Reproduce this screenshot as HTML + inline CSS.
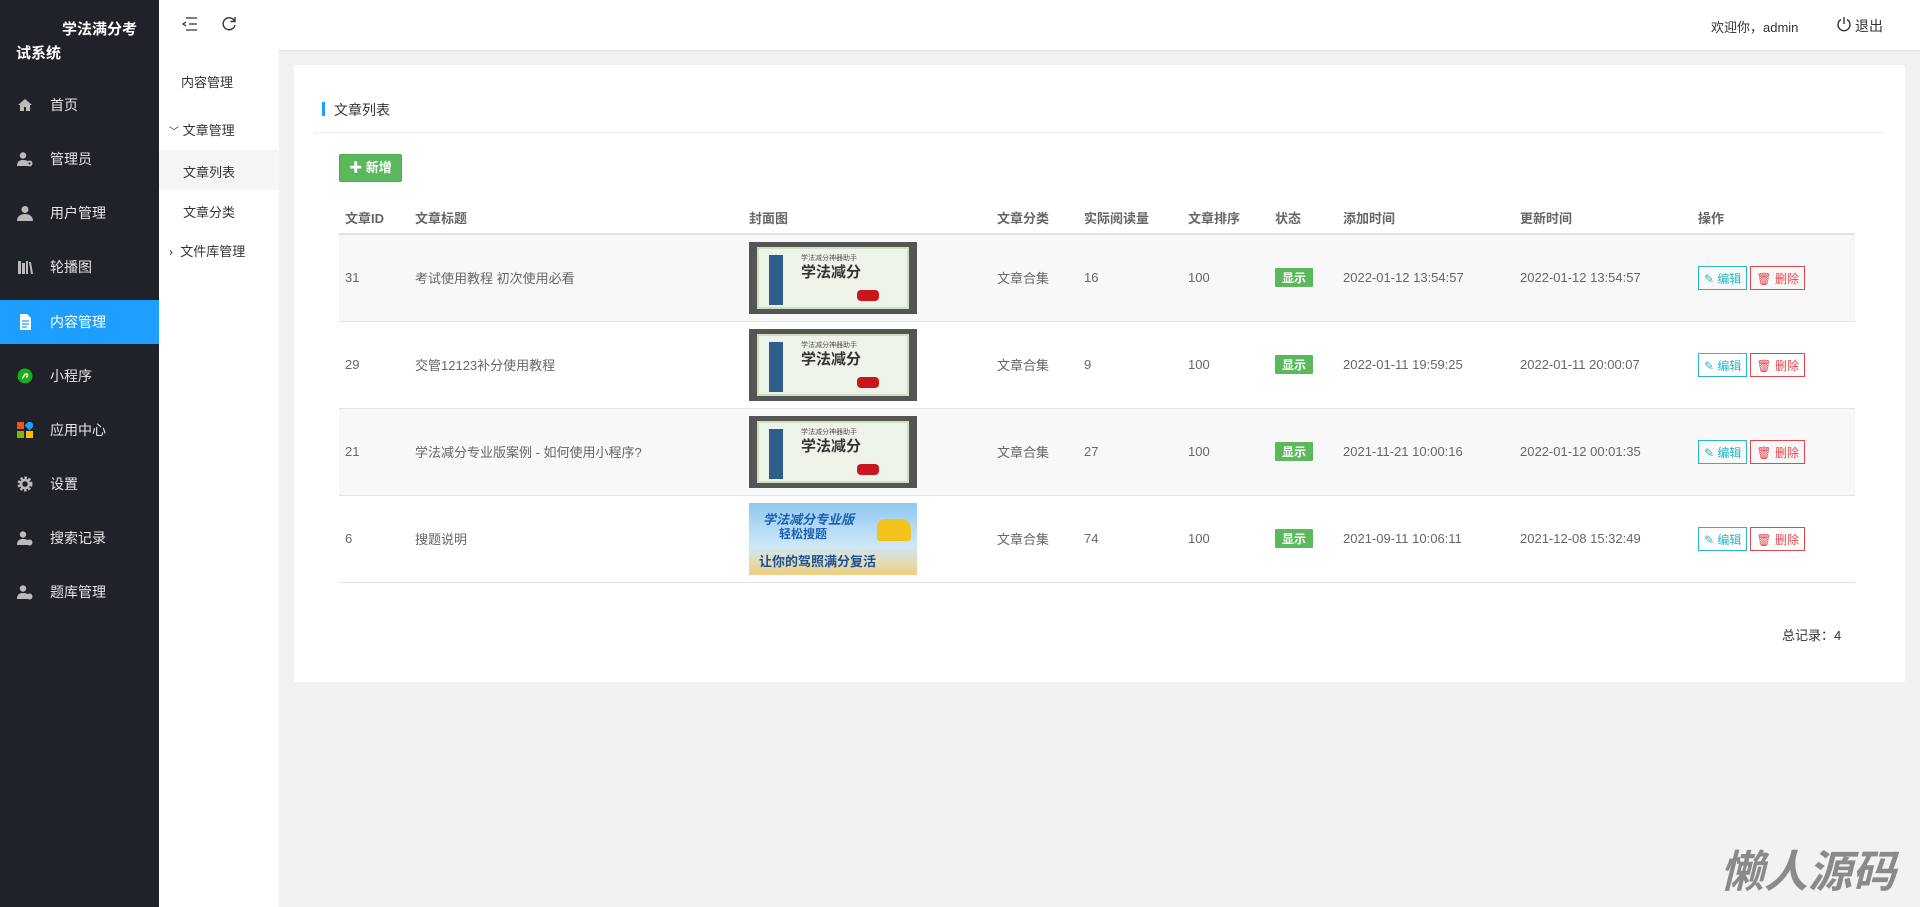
<!DOCTYPE html>
<html style="overflow:hidden"><head><meta charset="utf-8"><style>
*{margin:0;padding:0;box-sizing:border-box}
body{width:1920px;height:907px;overflow:hidden;background:#f2f2f2;font-family:"Liberation Sans","Noto Sans CJK SC",sans-serif;font-size:13px;color:#666;position:relative}
.side{position:absolute;left:0;top:0;width:159px;height:907px;background:#20222a;color:#fff}
.logo{position:absolute;color:#fff;font-size:15px;font-weight:bold}
.mi{position:absolute;left:0;width:159px;height:44px;line-height:44px;font-size:14px;color:#e6e6e6}
.mi .ic{position:absolute;left:17px;top:14px;width:16px;height:16px}
.mi span{position:absolute;left:50px}
.mi.on{background:#1e9fff;color:#fff}
.top{position:absolute;left:159px;top:0;right:0;height:50px;background:#fff;box-shadow:0 1px 2px rgba(0,0,0,.08)}
.sub{position:absolute;left:159px;top:50px;width:120px;height:857px;background:#fff;font-size:13px;color:#333}
.card{position:absolute;left:294px;top:65px;width:1611px;height:617px;background:#fff;border-radius:2px}
table{position:absolute;left:45px;top:137px;width:1516px;border-collapse:collapse}
th{height:32px;text-align:left;font-weight:bold;color:#666;border-bottom:2px solid #e2e2e2;padding-left:6px}
td{height:87px;border-bottom:1px solid #e2e2e2;padding-left:6px;color:#666}
tr.g td{background:#f8f8f8}
.cov{width:168px;height:72px;background:#555;padding:5px 8px;position:relative}
.cov .in{width:100%;height:100%;background:#eef3ea;position:relative;overflow:hidden;border:2px solid #cfe0c0}
.badge{display:inline-block;background:#5cb85c;color:#fff;font-size:12px;font-weight:bold;padding:1px 7px;border-radius:1px}
.be{display:inline-block;border:1px solid #28b7c8;color:#28b7c8;font-size:12px;padding:3px 5px;height:24px}
.bd{display:inline-block;border:1px solid #e0474f;color:#e0474f;font-size:12px;padding:3px 5px;height:24px;margin-left:3px}
</style></head><body>
<div class="side">
 <div class="logo" style="left:62px;top:18px">学法满分考</div>
 <div class="logo" style="left:16px;top:42px">试系统</div>
 <div class="mi" style="top:83px"><svg class="ic" viewBox="0 0 16 16"><path d="M8 2L1 8h2v6h4v-4h2v4h4V8h2z" fill="#bbb"/></svg><span>首页</span></div>
 <div class="mi" style="top:137px"><svg class="ic" viewBox="0 0 16 16"><circle cx="6" cy="4.5" r="3.2" fill="#bbb"/><path d="M0 15c0-5 3-6 6-6s5 1 5 2v4z" fill="#bbb"/><circle cx="12.5" cy="12.5" r="3" fill="#bbb"/><circle cx="12.5" cy="12.5" r="1" fill="#20222a"/></svg><span>管理员</span></div>
 <div class="mi" style="top:191px"><svg class="ic" viewBox="0 0 16 16"><circle cx="8" cy="4.5" r="3.5" fill="#bbb"/><path d="M0 16c0-5 4-7 8-7s8 2 8 7z" fill="#bbb"/></svg><span>用户管理</span></div>
 <div class="mi" style="top:245px"><svg class="ic" viewBox="0 0 16 16"><path d="M1 2h3v13H1zM5 4h3v11H5zM9 2h2v13H9zM12 3l2 0 2 12h-2z" fill="#bbb"/></svg><span>轮播图</span></div>
 <div class="mi on" style="top:300px"><svg class="ic" viewBox="0 0 16 16"><path d="M3 0h7l4 4v12H3z" fill="#fff"/><path d="M5 7h7M5 10h7M5 13h5" stroke="#1e9fff" stroke-width="1.2"/></svg><span>内容管理</span></div>
 <div class="mi" style="top:354px"><svg class="ic" viewBox="0 0 16 16"><circle cx="8" cy="8" r="7.5" fill="#1aad19"/><path d="M5 10c2 0 2-4 4-4s2 3 0 3" stroke="#fff" stroke-width="1.5" fill="none"/></svg><span>小程序</span></div>
 <div class="mi" style="top:408px"><svg class="ic" viewBox="0 0 16 16"><rect x="0" y="0" width="7" height="7" fill="#f25022"/><rect x="9" y="0" width="7" height="7" fill="#1e9fff" transform="rotate(45 12.5 3.5)"/><rect x="0" y="9" width="7" height="7" fill="#7fba00"/><rect x="9" y="9" width="7" height="7" fill="#ffb900"/></svg><span>应用中心</span></div>
 <div class="mi" style="top:462px"><svg class="ic" viewBox="0 0 16 16"><circle cx="8" cy="8" r="5.5" fill="none" stroke="#bbb" stroke-width="4" stroke-dasharray="2.2 1.4"/><circle cx="8" cy="8" r="4" fill="none" stroke="#bbb" stroke-width="2.5"/></svg><span>设置</span></div>
 <div class="mi" style="top:516px"><svg class="ic" viewBox="0 0 16 16"><circle cx="6" cy="4.5" r="3.2" fill="#bbb"/><path d="M0 15c0-5 3-6 6-6s5 1 5 2v4z" fill="#bbb"/><circle cx="12.5" cy="12.5" r="3" fill="#bbb"/></svg><span>搜索记录</span></div>
 <div class="mi" style="top:570px"><svg class="ic" viewBox="0 0 16 16"><circle cx="6" cy="4.5" r="3.2" fill="#bbb"/><path d="M0 15c0-5 3-6 6-6s5 1 5 2v4z" fill="#bbb"/><circle cx="12.5" cy="12.5" r="3" fill="#bbb"/></svg><span>题库管理</span></div>
</div>
<div class="top">
 <svg style="position:absolute;left:23px;top:17px" width="16" height="14" viewBox="0 0 16 14"><path d="M4 1h11M7 7h8M4 13h11M4 5L1 7l3 2" stroke="#333" stroke-width="1.3" fill="none"/></svg>
 <svg style="position:absolute;left:62px;top:16px" width="16" height="16" viewBox="0 0 16 16"><path d="M13.5 5A6 6 0 1 0 14 9" stroke="#333" stroke-width="1.4" fill="none"/><path d="M14 1v4.5h-4.5" stroke="#333" stroke-width="1.4" fill="none"/></svg>
 <div style="position:absolute;left:1552px;top:17px;color:#333;font-size:13px">欢迎你，admin</div>
 <svg style="position:absolute;left:1677px;top:16px" width="16" height="16" viewBox="0 0 16 16"><path d="M5 3.5A6 6 0 1 0 11 3.5M8 1v7" stroke="#333" stroke-width="1.4" fill="none"/></svg>
 <div style="position:absolute;left:1696px;top:16px;color:#333;font-size:14px">退出</div>
</div>
<div class="sub">
 <div style="position:absolute;left:22px;top:22px">内容管理</div>
 <div style="position:absolute;left:10px;top:70px"><span style="font-size:10px">﹀</span> 文章管理</div>
 <div style="position:absolute;left:0;top:100px;width:120px;height:40px;background:#f5f5f5"></div>
 <div style="position:absolute;left:24px;top:112px">文章列表</div>
 <div style="position:absolute;left:24px;top:152px">文章分类</div>
 <div style="position:absolute;left:10px;top:191px"><span style="font-size:12px">›</span>&nbsp; 文件库管理</div>
</div>
<div class="card">
 <div style="position:absolute;left:28px;top:37px;width:3px;height:14px;background:#1e9fff"></div>
 <div style="position:absolute;left:40px;top:35px;font-size:14px;color:#333">文章列表</div>
 <div style="position:absolute;left:20px;top:67px;right:20px;height:1px;background:#eee"></div>
 <div style="position:absolute;left:45px;top:89px;width:63px;height:28px;background:#5cb85c;border:1px solid #4cae4c;border-radius:2px;color:#fff;font-weight:bold;font-size:13px;line-height:26px;text-align:center">✚ 新增</div>
 <table>
 <tr><th style="width:70px">文章ID</th><th style="width:334px">文章标题</th><th style="width:248px">封面图</th><th style="width:87px">文章分类</th><th style="width:104px">实际阅读量</th><th style="width:87px">文章排序</th><th style="width:68px">状态</th><th style="width:177px">添加时间</th><th style="width:178px">更新时间</th><th>操作</th></tr>
 <tr class="g"><td>31</td><td>考试使用教程 初次使用必看</td><td><div class="cov"><div class="in"><div style="position:absolute;left:10px;top:6px;width:14px;height:50px;background:#2e5f8a"></div><div style="position:absolute;left:42px;top:4px;font-size:7px;color:#555">学法减分神器助手</div><div style="position:absolute;left:42px;top:12px;font-size:15px;font-weight:bold;color:#333">学法减分</div><div style="position:absolute;right:28px;bottom:6px;width:22px;height:11px;background:#c9161c;border-radius:4px"></div></div></div></td><td>文章合集</td><td>16</td><td>100</td><td><span class="badge">显示</span></td><td>2022-01-12 13:54:57</td><td>2022-01-12 13:54:57</td><td><span class="be">✎ 编辑</span><span class="bd">🗑 删除</span></td></tr>
 <tr><td>29</td><td>交管12123补分使用教程</td><td><div class="cov"><div class="in"><div style="position:absolute;left:10px;top:6px;width:14px;height:50px;background:#2e5f8a"></div><div style="position:absolute;left:42px;top:4px;font-size:7px;color:#555">学法减分神器助手</div><div style="position:absolute;left:42px;top:12px;font-size:15px;font-weight:bold;color:#333">学法减分</div><div style="position:absolute;right:28px;bottom:6px;width:22px;height:11px;background:#c9161c;border-radius:4px"></div></div></div></td><td>文章合集</td><td>9</td><td>100</td><td><span class="badge">显示</span></td><td>2022-01-11 19:59:25</td><td>2022-01-11 20:00:07</td><td><span class="be">✎ 编辑</span><span class="bd">🗑 删除</span></td></tr>
 <tr class="g"><td>21</td><td>学法减分专业版案例 - 如何使用小程序?</td><td><div class="cov"><div class="in"><div style="position:absolute;left:10px;top:6px;width:14px;height:50px;background:#2e5f8a"></div><div style="position:absolute;left:42px;top:4px;font-size:7px;color:#555">学法减分神器助手</div><div style="position:absolute;left:42px;top:12px;font-size:15px;font-weight:bold;color:#333">学法减分</div><div style="position:absolute;right:28px;bottom:6px;width:22px;height:11px;background:#c9161c;border-radius:4px"></div></div></div></td><td>文章合集</td><td>27</td><td>100</td><td><span class="badge">显示</span></td><td>2021-11-21 10:00:16</td><td>2022-01-12 00:01:35</td><td><span class="be">✎ 编辑</span><span class="bd">🗑 删除</span></td></tr>
 <tr><td>6</td><td>搜题说明</td><td><div style="width:168px;height:72px;background:linear-gradient(#8fc8f0,#cfe8f8 60%,#f0d080);position:relative;overflow:hidden"><div style="position:absolute;left:14px;top:6px;font-size:13px;font-weight:bold;font-style:italic;color:#1a5fb4">学法减分专业版</div><div style="position:absolute;left:30px;top:22px;font-size:12px;font-weight:bold;color:#1a5fb4">轻松搜题</div><div style="position:absolute;left:10px;top:48px;font-size:13px;font-weight:bold;color:#1a4f9a">让你的驾照满分复活</div><div style="position:absolute;right:6px;top:16px;width:34px;height:22px;background:#f3c21b;border-radius:8px 10px 3px 3px"></div></div></td><td>文章合集</td><td>74</td><td>100</td><td><span class="badge">显示</span></td><td>2021-09-11 10:06:11</td><td>2021-12-08 15:32:49</td><td><span class="be">✎ 编辑</span><span class="bd">🗑 删除</span></td></tr>
 </table>
 <div style="position:absolute;left:1488px;top:560px;color:#333;font-size:13px">总记录：4</div>
</div>
<div style="position:absolute;left:1720px;top:848px;font-size:44px;line-height:50px;font-weight:bold;font-style:italic;color:#8a8a8a;white-space:nowrap">懒人源码</div>
</body></html>
